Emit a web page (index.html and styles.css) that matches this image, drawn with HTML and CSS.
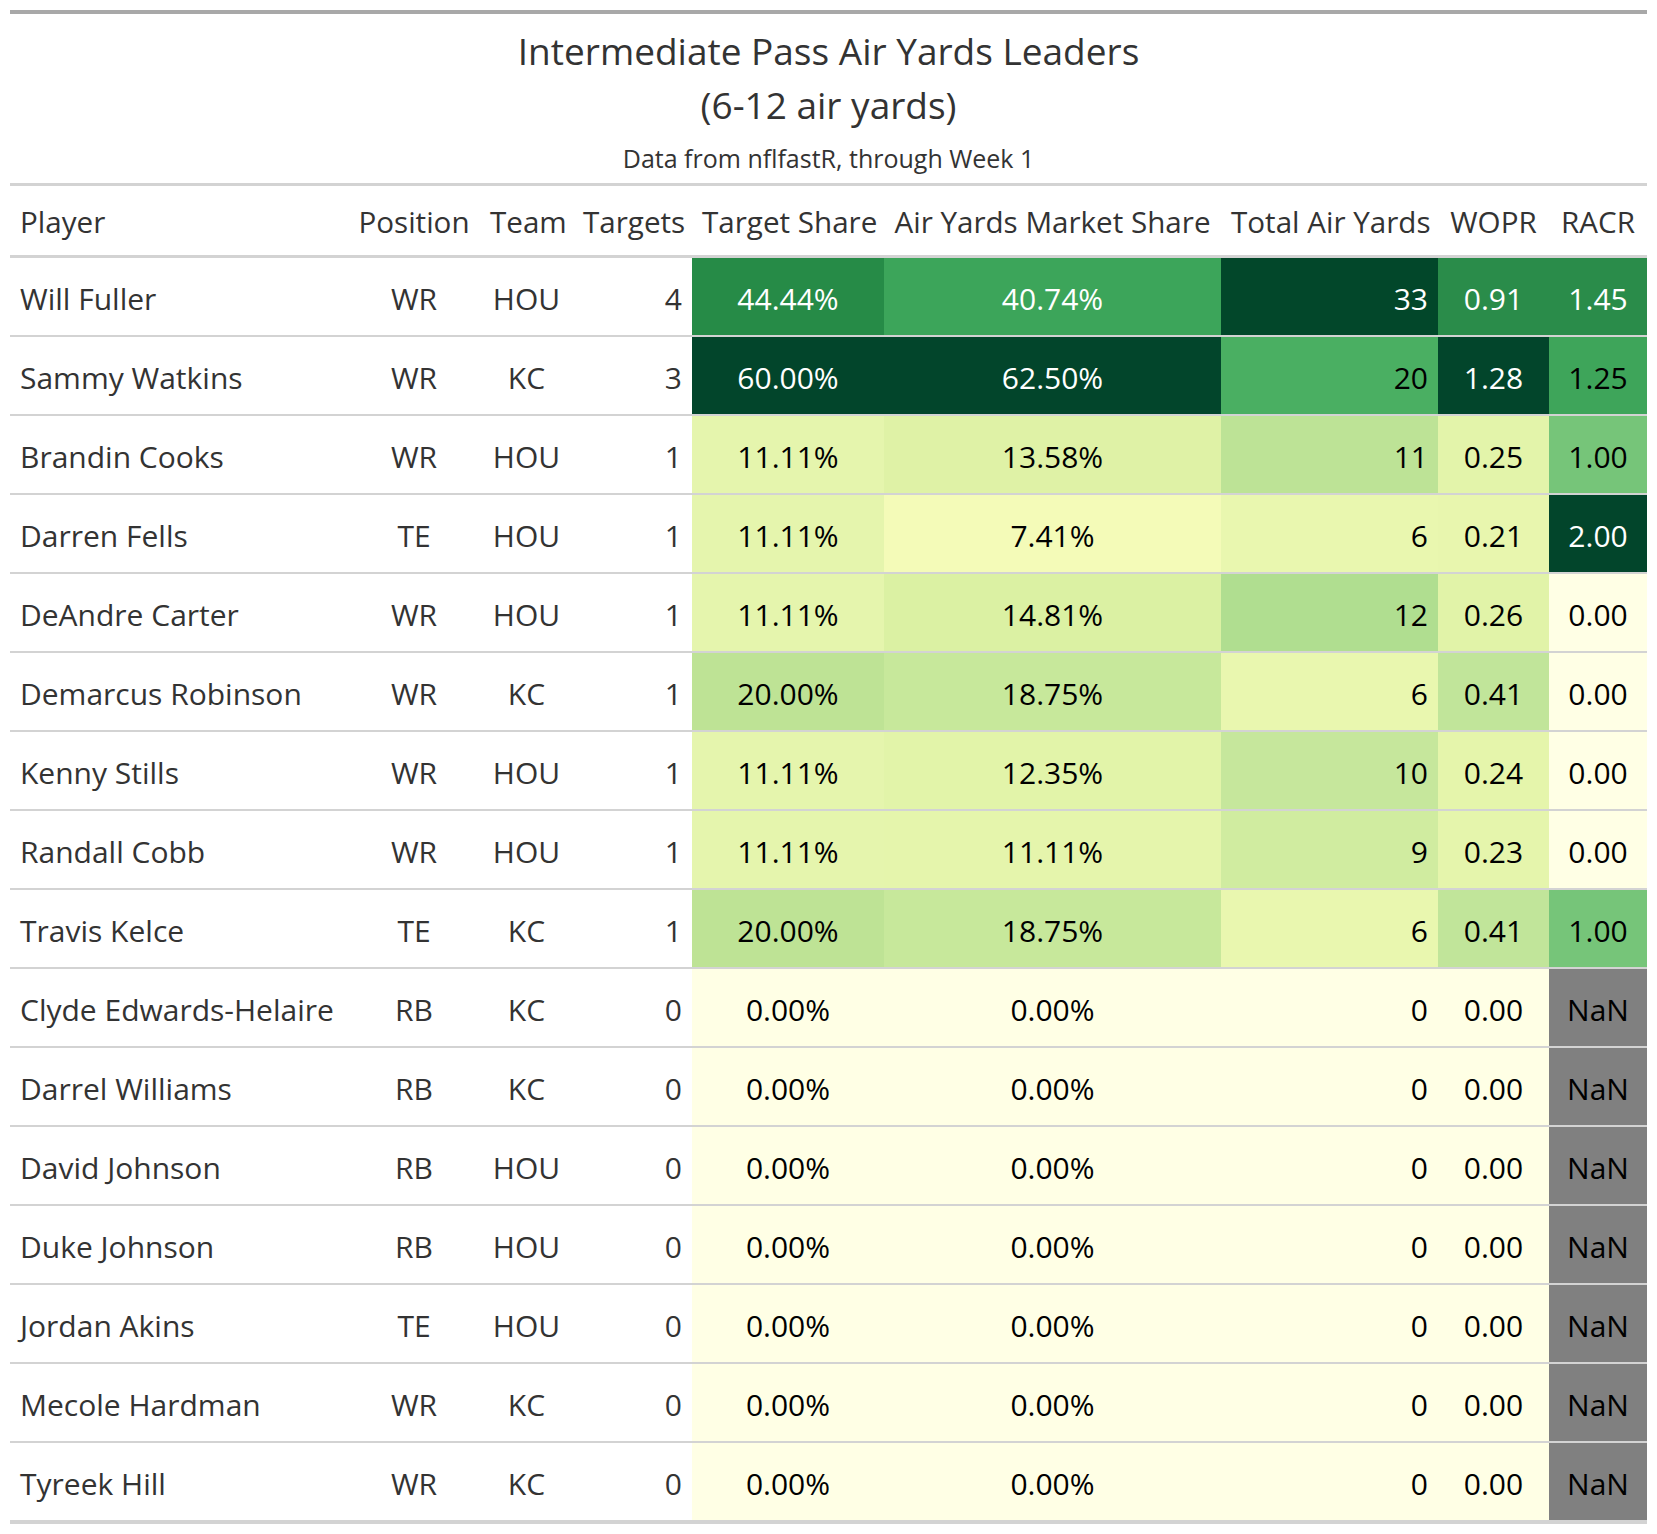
FILE: index.html
```html
<!DOCTYPE html>
<html>
<head>
<meta charset="utf-8">
<link rel="stylesheet" href="styles.css">
</head>
<body>
<table class="gt">
<colgroup>
<col class="c-player"><col class="c-pos"><col class="c-team"><col class="c-tgt"><col class="c-ts"><col class="c-ayms"><col class="c-tay"><col class="c-wopr"><col class="c-racr">
</colgroup>
<thead>
<tr><th colspan="9" class="title">Intermediate Pass Air Yards Leaders<br>(6-12 air yards)</th></tr>
<tr><th colspan="9" class="subtitle">Data from nflfastR, through Week 1</th></tr>
<tr class="colhead">
<th class="l">Player</th><th class="c">Position</th><th class="c">Team</th><th class="r">Targets</th><th class="c">Target Share</th><th class="c">Air Yards Market Share</th><th class="r">Total Air Yards</th><th class="c">WOPR</th><th class="c">RACR</th>
</tr>
</thead>
<tbody>
<tr><td class="l">Will Fuller</td><td class="c">WR</td><td class="c">HOU</td><td class="r">4</td><td class="c w" style="background:#268b47">44.44%</td><td class="c w" style="background:#3ca55a">40.74%</td><td class="r w" style="background:#02472a">33</td><td class="c w" style="background:#2a8c4a">0.91</td><td class="c w" style="background:#2a8c4a">1.45</td></tr>
<tr><td class="l">Sammy Watkins</td><td class="c">WR</td><td class="c">KC</td><td class="r">3</td><td class="c w" style="background:#02452b">60.00%</td><td class="c w" style="background:#02452b">62.50%</td><td class="r" style="background:#4aaf62">20</td><td class="c w" style="background:#02452b">1.28</td><td class="c" style="background:#3ea55a">1.25</td></tr>
<tr><td class="l">Brandin Cooks</td><td class="c">WR</td><td class="c">HOU</td><td class="r">1</td><td class="c" style="background:#e5f5ad">11.11%</td><td class="c" style="background:#dff2a6">13.58%</td><td class="r" style="background:#bde396">11</td><td class="c" style="background:#e3f4aa">0.25</td><td class="c" style="background:#76c579">1.00</td></tr>
<tr><td class="l">Darren Fells</td><td class="c">TE</td><td class="c">HOU</td><td class="r">1</td><td class="c" style="background:#e5f5ad">11.11%</td><td class="c" style="background:#f4fbb8">7.41%</td><td class="r" style="background:#e9f7af">6</td><td class="c" style="background:#e8f6ae">0.21</td><td class="c w" style="background:#02452b">2.00</td></tr>
<tr><td class="l">DeAndre Carter</td><td class="c">WR</td><td class="c">HOU</td><td class="r">1</td><td class="c" style="background:#e5f5ad">11.11%</td><td class="c" style="background:#dbf1a3">14.81%</td><td class="r" style="background:#b0de90">12</td><td class="c" style="background:#e1f3a8">0.26</td><td class="c" style="background:#ffffe5">0.00</td></tr>
<tr><td class="l">Demarcus Robinson</td><td class="c">WR</td><td class="c">KC</td><td class="r">1</td><td class="c" style="background:#bee395">20.00%</td><td class="c" style="background:#c7e89b">18.75%</td><td class="r" style="background:#e9f7af">6</td><td class="c" style="background:#c1e59a">0.41</td><td class="c" style="background:#ffffe5">0.00</td></tr>
<tr><td class="l">Kenny Stills</td><td class="c">WR</td><td class="c">HOU</td><td class="r">1</td><td class="c" style="background:#e5f5ad">11.11%</td><td class="c" style="background:#e2f4a9">12.35%</td><td class="r" style="background:#c6e79c">10</td><td class="c" style="background:#e5f5ab">0.24</td><td class="c" style="background:#ffffe5">0.00</td></tr>
<tr><td class="l">Randall Cobb</td><td class="c">WR</td><td class="c">HOU</td><td class="r">1</td><td class="c" style="background:#e5f5ad">11.11%</td><td class="c" style="background:#e5f5ac">11.11%</td><td class="r" style="background:#d0eca0">9</td><td class="c" style="background:#e5f5ac">0.23</td><td class="c" style="background:#ffffe5">0.00</td></tr>
<tr><td class="l">Travis Kelce</td><td class="c">TE</td><td class="c">KC</td><td class="r">1</td><td class="c" style="background:#bee395">20.00%</td><td class="c" style="background:#c7e89b">18.75%</td><td class="r" style="background:#e9f7af">6</td><td class="c" style="background:#c1e59a">0.41</td><td class="c" style="background:#76c579">1.00</td></tr>
<tr><td class="l">Clyde Edwards-Helaire</td><td class="c">RB</td><td class="c">KC</td><td class="r">0</td><td class="c z">0.00%</td><td class="c z">0.00%</td><td class="r z">0</td><td class="c z">0.00</td><td class="c nan">NaN</td></tr>
<tr><td class="l">Darrel Williams</td><td class="c">RB</td><td class="c">KC</td><td class="r">0</td><td class="c z">0.00%</td><td class="c z">0.00%</td><td class="r z">0</td><td class="c z">0.00</td><td class="c nan">NaN</td></tr>
<tr><td class="l">David Johnson</td><td class="c">RB</td><td class="c">HOU</td><td class="r">0</td><td class="c z">0.00%</td><td class="c z">0.00%</td><td class="r z">0</td><td class="c z">0.00</td><td class="c nan">NaN</td></tr>
<tr><td class="l">Duke Johnson</td><td class="c">RB</td><td class="c">HOU</td><td class="r">0</td><td class="c z">0.00%</td><td class="c z">0.00%</td><td class="r z">0</td><td class="c z">0.00</td><td class="c nan">NaN</td></tr>
<tr><td class="l">Jordan Akins</td><td class="c">TE</td><td class="c">HOU</td><td class="r">0</td><td class="c z">0.00%</td><td class="c z">0.00%</td><td class="r z">0</td><td class="c z">0.00</td><td class="c nan">NaN</td></tr>
<tr><td class="l">Mecole Hardman</td><td class="c">WR</td><td class="c">KC</td><td class="r">0</td><td class="c z">0.00%</td><td class="c z">0.00%</td><td class="r z">0</td><td class="c z">0.00</td><td class="c nan">NaN</td></tr>
<tr><td class="l">Tyreek Hill</td><td class="c">WR</td><td class="c">KC</td><td class="r">0</td><td class="c z">0.00%</td><td class="c z">0.00%</td><td class="r z">0</td><td class="c z">0.00</td><td class="c nan">NaN</td></tr>
</tbody>
</table>
</body>
</html>
```
FILE: styles.css
```css
html, body {
  margin: 0;
  padding: 0;
  background: #ffffff;
}
body {
  padding: 10px 10px 0 10px;
  font-family: "Open Sans", "Noto Sans", sans-serif;
  color: #333333;
}
.gt {
  border-collapse: collapse;
  table-layout: fixed;
  width: 1637px;
  border-top: 4px solid #a8a8a8;
  font-size: 30px;
}
.c-player { width: 338px; }
.c-pos { width: 132px; }
.c-team { width: 93px; }
.c-tgt { width: 119px; }
.c-ts { width: 192px; }
.c-ayms { width: 337px; }
.c-tay { width: 217px; }
.c-wopr { width: 111px; }
.c-racr { width: 98px; }
.title {
  font-weight: normal;
  font-size: 37px;
  line-height: 54px;
  padding: 10px 0 0 0;
  text-align: center;
  color: #333333;
}
.subtitle {
  font-weight: normal;
  font-size: 25px;
  line-height: 36px;
  padding: 8px 0 7px 0;
  text-align: center;
  color: #333333;
  border-bottom: 3px solid #d3d3d3;
}
.colhead th {
  font-weight: normal;
  font-size: 29.6px;
  line-height: 43px;
  padding: 14px 10px 12px 10px;
  white-space: nowrap;
  border-bottom: 3px solid #d3d3d3;
  color: #333333;
}
td {
  line-height: 45px;
  padding: 18px 10px 14px 10px;
  white-space: nowrap;
  border-top: 2px solid #d3d3d3;
  color: #000000;
}
td.l, td.c:nth-child(2), td.c:nth-child(3), td.r:nth-child(4) {
  color: #333333;
}
tbody {
  border-bottom: 4px solid #d3d3d3;
}
.l { text-align: left; }
.c { text-align: center; }
.r { text-align: right; }
td.w { color: #ffffff; }
td.z { background: #ffffe5; }
td.nan { background: #808080; color: #000000; }
```
